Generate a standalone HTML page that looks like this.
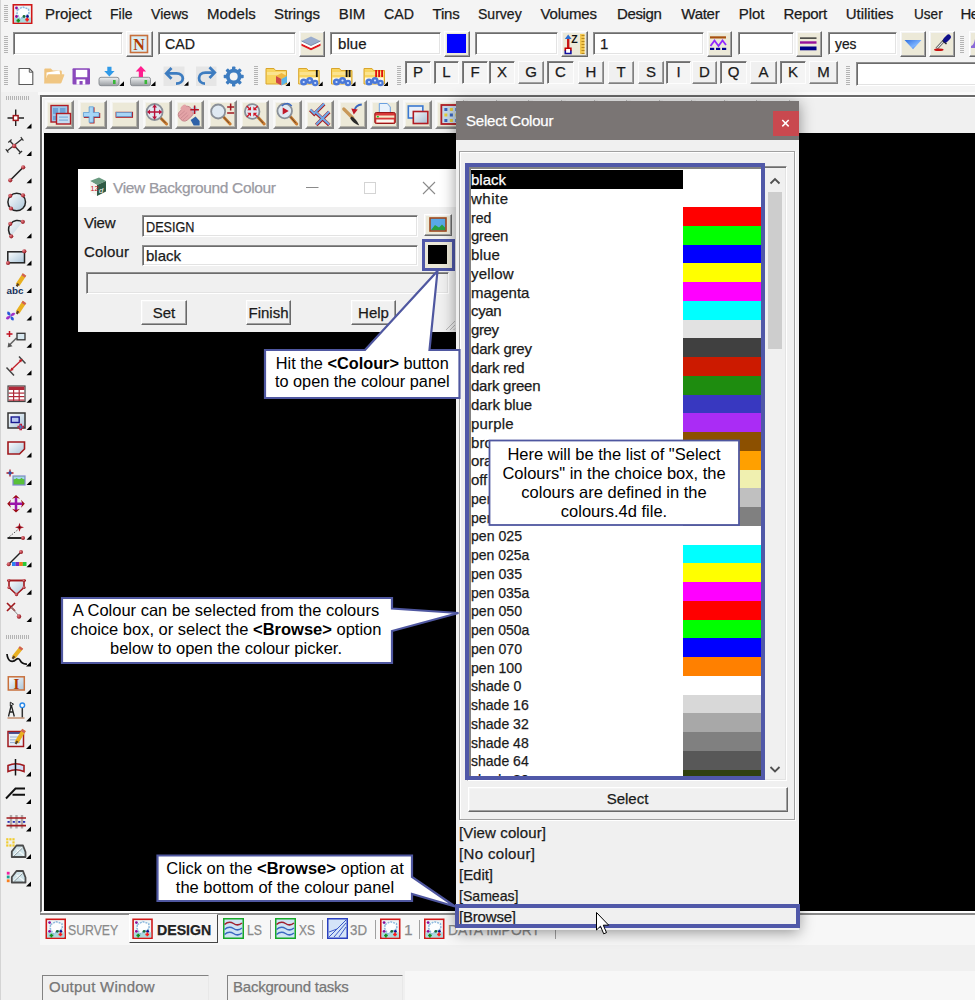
<!DOCTYPE html><html><head><meta charset="utf-8"><title>12d</title><style>
*{box-sizing:border-box;margin:0;padding:0}
html,body{width:975px;height:1000px;overflow:hidden;background:#f0f0f0;font-family:"Liberation Sans",sans-serif;}
.a{position:absolute}
.t{position:absolute;white-space:nowrap;color:#1a1a1a;line-height:1;-webkit-text-stroke:.25px}
.sunk{position:absolute;background:#fff;border:1px solid;border-color:#8e8e8e #fff #fff #8e8e8e;box-shadow:inset 1px 1px 0 #6c6c6c, inset -1px -1px 0 #e3e3e3}
.rais{position:absolute;background:#f0f0f0;border:1px solid;border-color:#fff #696969 #696969 #fff;box-shadow:inset -1px -1px 0 #a0a0a0, inset 1px 1px 0 #f4f4f4}
.lb{position:absolute;background:#f0f0f0;border:1px solid;border-color:#fdfdfd #808080 #808080 #fdfdfd;box-shadow:inset -1px -1px 0 #a0a0a0}
.lbs{position:absolute;background:#f4f4f4;border:1px solid;border-color:#808080 #fdfdfd #fdfdfd #808080;box-shadow:inset 1px 1px 0 #6e6e6e}
.vb{position:absolute;background:#ece9d8;border:2px solid;border-color:#f8f8f8 #858585 #858585 #f8f8f8;box-shadow:inset -1px -1px 0 #b4b2a8, inset 1px 1px 0 #f3f2ec}
.co{position:absolute;background:#fff;border:2px solid #4f57a0;color:#000;text-align:center;font-size:16px;line-height:19px;white-space:nowrap}
svg{position:absolute;left:0;top:0;overflow:visible}
</style></head><body>
<div class="a" style="left:0;top:0;width:975px;height:92px;background:#f4f4f4"></div>
<div class="t" style="left:45px;top:6.3px;font-size:15px;color:#1a1a1a;letter-spacing:-0.031px;">Project</div>
<div class="t" style="left:109.5px;top:6.3px;font-size:15px;color:#1a1a1a;transform:scaleX(0.9309);transform-origin:0 0;">File</div>
<div class="t" style="left:151px;top:6.3px;font-size:15px;color:#1a1a1a;transform:scaleX(0.941);transform-origin:0 0;">Views</div>
<div class="t" style="left:207px;top:6.3px;font-size:15px;color:#1a1a1a;letter-spacing:0.089px;">Models</div>
<div class="t" style="left:274px;top:6.3px;font-size:15px;color:#1a1a1a;letter-spacing:-0.114px;">Strings</div>
<div class="t" style="left:338.7px;top:6.3px;font-size:15px;color:#1a1a1a;letter-spacing:-0.034px;">BIM</div>
<div class="t" style="left:383.5px;top:6.3px;font-size:15px;color:#1a1a1a;transform:scaleX(0.9472);transform-origin:0 0;">CAD</div>
<div class="t" style="left:432.5px;top:6.3px;font-size:15px;color:#1a1a1a;letter-spacing:-0.161px;">Tins</div>
<div class="t" style="left:478px;top:6.3px;font-size:15px;color:#1a1a1a;transform:scaleX(0.936);transform-origin:0 0;">Survey</div>
<div class="t" style="left:540.5px;top:6.3px;font-size:15px;color:#1a1a1a;letter-spacing:-0.172px;">Volumes</div>
<div class="t" style="left:617px;top:6.3px;font-size:15px;color:#1a1a1a;letter-spacing:-0.359px;">Design</div>
<div class="t" style="left:681.3px;top:6.3px;font-size:15px;color:#1a1a1a;letter-spacing:-0.262px;">Water</div>
<div class="t" style="left:738.8px;top:6.3px;font-size:15px;color:#1a1a1a;letter-spacing:-0.083px;">Plot</div>
<div class="t" style="left:783.5px;top:6.3px;font-size:15px;color:#1a1a1a;letter-spacing:-0.265px;">Report</div>
<div class="t" style="left:845.8px;top:6.3px;font-size:15px;color:#1a1a1a;letter-spacing:-0.08px;">Utilities</div>
<div class="t" style="left:913.6px;top:6.3px;font-size:15px;color:#1a1a1a;transform:scaleX(0.9062);transform-origin:0 0;">User</div>
<div class="t" style="left:960.4px;top:6.3px;font-size:15px;color:#1a1a1a;letter-spacing:-0.575px;">He</div>
<div class="sunk" style="left:13px;top:32px;width:110px;height:23px"></div>
<div class="rais" style="left:126px;top:31px;width:27px;height:26px;background:#f4f4f4"></div>
<div class="sunk" style="left:158px;top:32px;width:138px;height:23px"></div>
<div class="t" style="left:165px;top:36.3px;font-size:15px;color:#1a1a1a;transform:scaleX(0.9472);transform-origin:0 0;">CAD</div>
<div class="rais" style="left:299px;top:31px;width:26px;height:26px;background:#ece9d8"></div>
<div class="sunk" style="left:330px;top:32px;width:111px;height:23px"></div>
<div class="t" style="left:338px;top:36.3px;font-size:15px;color:#1a1a1a;letter-spacing:0.046px;">blue</div>
<div class="rais" style="left:444px;top:31px;width:26px;height:26px;background:#ece9d8"><div class="a" style="left:2px;top:2px;width:19px;height:19px;background:#0000ff"></div></div>
<div class="sunk" style="left:475px;top:32px;width:83px;height:23px"></div>
<div class="rais" style="left:561px;top:31px;width:27px;height:26px;background:#ece9d8"></div>
<div class="sunk" style="left:593px;top:32px;width:111px;height:23px"></div>
<div class="t" style="left:600px;top:36.3px;font-size:15px;color:#1a1a1a;">1</div>
<div class="rais" style="left:707px;top:31px;width:25px;height:26px;background:#ece9d8"></div>
<div class="sunk" style="left:738px;top:32px;width:56px;height:23px"></div>
<div class="rais" style="left:796px;top:31px;width:26px;height:26px;background:#ece9d8"></div>
<div class="sunk" style="left:828px;top:32px;width:69px;height:23px"></div>
<div class="t" style="left:835px;top:36.3px;font-size:15px;color:#1a1a1a;transform:scaleX(0.9211);transform-origin:0 0;">yes</div>
<div class="rais" style="left:900px;top:31px;width:26px;height:26px;background:#ece9d8"></div>
<div class="rais" style="left:929px;top:31px;width:26px;height:26px;background:#ece9d8"></div>
<div class="rais" style="left:969px;top:31px;width:26px;height:26px;background:#ece9d8"></div>
<div class="lbs" style="left:405px;top:61px;width:26px;height:23px"></div>
<div class="t" style="left:412.997265625px;top:64.3px;font-size:15px;color:#1a1a1a;">P</div>
<div class="lbs" style="left:434px;top:61px;width:25px;height:23px"></div>
<div class="t" style="left:442.3287109375px;top:64.3px;font-size:15px;color:#1a1a1a;">L</div>
<div class="lbs" style="left:462px;top:61px;width:26px;height:23px"></div>
<div class="t" style="left:470.4185546875px;top:64.3px;font-size:15px;color:#1a1a1a;">F</div>
<div class="lbs" style="left:489px;top:61px;width:26px;height:23px"></div>
<div class="t" style="left:496.997265625px;top:64.3px;font-size:15px;color:#1a1a1a;">X</div>
<div class="lb" style="left:518px;top:61px;width:26px;height:23px"></div>
<div class="t" style="left:525.16640625px;top:64.3px;font-size:15px;color:#1a1a1a;">G</div>
<div class="lbs" style="left:547px;top:61px;width:27px;height:23px"></div>
<div class="t" style="left:555.08359375px;top:64.3px;font-size:15px;color:#1a1a1a;">C</div>
<div class="lb" style="left:578px;top:61px;width:26px;height:23px"></div>
<div class="t" style="left:585.58359375px;top:64.3px;font-size:15px;color:#1a1a1a;">H</div>
<div class="lb" style="left:608px;top:61px;width:26px;height:23px"></div>
<div class="t" style="left:616.4185546875px;top:64.3px;font-size:15px;color:#1a1a1a;">T</div>
<div class="lb" style="left:638px;top:61px;width:26px;height:23px"></div>
<div class="t" style="left:645.997265625px;top:64.3px;font-size:15px;color:#1a1a1a;">S</div>
<div class="lbs" style="left:666px;top:61px;width:25px;height:23px"></div>
<div class="t" style="left:676.41640625px;top:64.3px;font-size:15px;color:#1a1a1a;">I</div>
<div class="lb" style="left:692px;top:61px;width:25px;height:23px"></div>
<div class="t" style="left:699.08359375px;top:64.3px;font-size:15px;color:#1a1a1a;">D</div>
<div class="lbs" style="left:720px;top:61px;width:27px;height:23px"></div>
<div class="t" style="left:727.66640625px;top:64.3px;font-size:15px;color:#1a1a1a;">Q</div>
<div class="lb" style="left:750px;top:61px;width:27px;height:23px"></div>
<div class="t" style="left:758.497265625px;top:64.3px;font-size:15px;color:#1a1a1a;">A</div>
<div class="lbs" style="left:780px;top:61px;width:26px;height:23px"></div>
<div class="t" style="left:787.997265625px;top:64.3px;font-size:15px;color:#1a1a1a;">K</div>
<div class="lb" style="left:809px;top:61px;width:29px;height:23px"></div>
<div class="t" style="left:817.2521484375px;top:64.3px;font-size:15px;color:#1a1a1a;">M</div>
<div class="sunk" style="left:856px;top:62px;width:134px;height:24px"></div>
<div class="a" style="left:38px;top:92px;width:937px;height:3px;background:#fafafa"></div>
<div class="a" style="left:0;top:96px;width:40px;height:904px;background:#f0f0f0"></div>
<div class="a" style="left:40px;top:95px;width:940px;height:818px;background:#f0f0f0;border:2px solid;border-color:#696969 #fff #fff #696969;box-shadow:inset 1px 1px 0 #fff"></div>
<div class="a" style="left:43.5px;top:132.5px;width:932px;height:778.5px;background:#000"></div>
<div class="vb" style="left:45px;top:100px;width:29px;height:29px"></div>
<div class="vb" style="left:77.5px;top:100px;width:29px;height:29px"></div>
<div class="vb" style="left:110.1px;top:100px;width:29px;height:29px"></div>
<div class="vb" style="left:142.6px;top:100px;width:29px;height:29px"></div>
<div class="vb" style="left:175.1px;top:100px;width:29px;height:29px"></div>
<div class="vb" style="left:207.7px;top:100px;width:29px;height:29px"></div>
<div class="vb" style="left:240.2px;top:100px;width:29px;height:29px"></div>
<div class="vb" style="left:272.7px;top:100px;width:29px;height:29px"></div>
<div class="vb" style="left:305.2px;top:100px;width:29px;height:29px"></div>
<div class="vb" style="left:337.8px;top:100px;width:29px;height:29px"></div>
<div class="vb" style="left:370.3px;top:100px;width:29px;height:29px"></div>
<div class="vb" style="left:402.8px;top:100px;width:29px;height:29px"></div>
<div class="vb" style="left:435.4px;top:100px;width:29px;height:29px"></div>
<div class="vb" style="left:467.9px;top:100px;width:29px;height:29px"></div>
<div class="vb" style="left:500.4px;top:100px;width:29px;height:29px"></div>
<div class="vb" style="left:533px;top:100px;width:29px;height:29px"></div>
<div class="vb" style="left:565.5px;top:100px;width:29px;height:29px"></div>
<div class="vb" style="left:598px;top:100px;width:29px;height:29px"></div>
<div class="vb" style="left:630.5px;top:100px;width:29px;height:29px"></div>
<div class="vb" style="left:663.1px;top:100px;width:29px;height:29px"></div>
<div class="vb" style="left:695.6px;top:100px;width:29px;height:29px"></div>
<div class="vb" style="left:728.1px;top:100px;width:29px;height:29px"></div>
<div class="vb" style="left:760.7px;top:100px;width:29px;height:29px"></div>
<div class="a" style="left:40px;top:913px;width:935px;height:2px;background:#8a8a8a"></div>
<div class="a" style="left:40px;top:915px;width:935px;height:30px;background:#f7f7f7"></div>
<div class="a" style="left:0;top:945px;width:975px;height:26px;background:#f0f0f0"></div>
<div class="a" style="left:405px;top:971px;width:570px;height:29px;background:#f7f7f7"></div>
<div class="a" style="left:129px;top:914px;width:89px;height:29px;background:#f7f7f7;border:1px solid;border-color:#f7f7f7 #444 #444 #fff"></div>
<div class="t" style="left:68px;top:921.88px;font-size:15.5px;color:#8a8a8a;transform:scaleX(0.791);transform-origin:0 0;">SURVEY</div>
<div class="t" style="left:156.5px;top:921.88px;font-size:15.5px;color:#222;font-weight:bold;transform:scaleX(0.9137);transform-origin:0 0;">DESIGN</div>
<div class="t" style="left:247px;top:921.88px;font-size:15.5px;color:#8a8a8a;transform:scaleX(0.7912);transform-origin:0 0;">LS</div>
<div class="t" style="left:299px;top:921.88px;font-size:15.5px;color:#8a8a8a;transform:scaleX(0.7738);transform-origin:0 0;">XS</div>
<div class="t" style="left:350px;top:921.88px;font-size:15.5px;color:#8a8a8a;transform:scaleX(0.858);transform-origin:0 0;">3D</div>
<div class="t" style="left:404px;top:921.88px;font-size:15.5px;color:#8a8a8a;">1</div>
<div class="t" style="left:448px;top:921.88px;font-size:15.5px;color:#8a8a8a;transform:scaleX(0.8977);transform-origin:0 0;">DATA IMPORT</div>
<div class="a" style="left:42px;top:975px;width:167px;height:26px;border:1px solid;border-color:#828282 #e8e8e8 #e8e8e8 #828282;background:#f0f0f0"></div>
<div class="t" style="left:49px;top:979.3px;font-size:15px;color:#777;letter-spacing:0.263px;">Output Window</div>
<div class="a" style="left:227px;top:975px;width:176px;height:26px;border:1px solid;border-color:#828282 #e8e8e8 #e8e8e8 #828282;background:#f0f0f0"></div>
<div class="t" style="left:233px;top:979.3px;font-size:15px;color:#777;letter-spacing:-0.229px;">Background tasks</div>
<div class="a" style="left:0;top:0;width:1px;height:1000px;background:#d4d4d4"></div>
<svg width="975" height="1000"><rect x="4" y="5" width="4" height="1" fill="#b4b4b4"/><rect x="4" y="7" width="4" height="1" fill="#b4b4b4"/><rect x="4" y="9" width="4" height="1" fill="#b4b4b4"/><rect x="4" y="11" width="4" height="1" fill="#b4b4b4"/><rect x="4" y="13" width="4" height="1" fill="#b4b4b4"/><rect x="4" y="15" width="4" height="1" fill="#b4b4b4"/><rect x="4" y="17" width="4" height="1" fill="#b4b4b4"/><rect x="4" y="19" width="4" height="1" fill="#b4b4b4"/><rect x="4" y="21" width="4" height="1" fill="#b4b4b4"/><rect x="4" y="36" width="4" height="1" fill="#b4b4b4"/><rect x="4" y="38" width="4" height="1" fill="#b4b4b4"/><rect x="4" y="40" width="4" height="1" fill="#b4b4b4"/><rect x="4" y="42" width="4" height="1" fill="#b4b4b4"/><rect x="4" y="44" width="4" height="1" fill="#b4b4b4"/><rect x="4" y="46" width="4" height="1" fill="#b4b4b4"/><rect x="4" y="48" width="4" height="1" fill="#b4b4b4"/><rect x="4" y="50" width="4" height="1" fill="#b4b4b4"/><rect x="4" y="52" width="4" height="1" fill="#b4b4b4"/><rect x="4" y="66" width="4" height="1" fill="#b4b4b4"/><rect x="4" y="68" width="4" height="1" fill="#b4b4b4"/><rect x="4" y="70" width="4" height="1" fill="#b4b4b4"/><rect x="4" y="72" width="4" height="1" fill="#b4b4b4"/><rect x="4" y="74" width="4" height="1" fill="#b4b4b4"/><rect x="4" y="76" width="4" height="1" fill="#b4b4b4"/><rect x="4" y="78" width="4" height="1" fill="#b4b4b4"/><rect x="4" y="80" width="4" height="1" fill="#b4b4b4"/><rect x="4" y="82" width="4" height="1" fill="#b4b4b4"/><rect x="4" y="84" width="4" height="1" fill="#b4b4b4"/><g><rect x="13.3" y="4.8" width="18.4" height="18.4" fill="#eef6f7" stroke="#d01818" stroke-width="1.6"/><rect x="14.1" y="17.5" width="16.8" height="4.9" fill="#a9dadd"/><polygon points="17.5,10 22.5,7 28.5,9 29,14 23.5,17 20,19 17,13.5" fill="#fdfefe" stroke="#8fb8dc" stroke-width="1.5" stroke-dasharray="2,1"/><circle cx="16.5" cy="8" r="1.4" fill="#8a109a"/><circle cx="16.5" cy="16.5" r="1.4" fill="#8a109a"/><circle cx="27.5" cy="16.5" r="1.4" fill="#101090"/><circle cx="24" cy="16.5" r="1.4" fill="#186a38"/><path d="M18.3,18.8v3.6M16.5,20.6h3.6" stroke="#12901e" stroke-width="1.7" fill="none"/><path d="M27.1,17.8v3.6M25.3,19.6h3.6" stroke="#ff1818" stroke-width="1.7" fill="none"/></g><polygon points="19,68.5 29.5,68.5 32.8,72 32.8,84.5 19,84.5" fill="#fff" stroke="#5a5a5a" stroke-width="1.1"/><polyline points="29.3,68.5 29.3,72.2 32.8,72.2" fill="none" stroke="#5a5a5a" stroke-width="1"/><path d="M44.3,83.6 V69.5 q0,-1 1,-1 h5.5 l2,2 h8 q1,0 1,1 v4z" fill="#efc37d"/><polygon points="46.5,72.5 59.5,70.5 60.5,76 46.5,78" fill="#fff"/><path d="M44.3,83.6 l3.2,-8.6 q.3,-.8 1.2,-.8 H63.5 q1.2,0 .8,1.1 l-2.9,7.5 q-.3,.8 -1.2,.8z" fill="#f0c682"/><rect x="72.5" y="68.2" width="17.5" height="16.4" rx="1" fill="#8a48bc"/><rect x="75.8" y="69.8" width="11.5" height="7.4" fill="#fff"/><rect x="76.5" y="79.4" width="8.8" height="5.2" fill="#fff"/><rect x="79.5" y="81" width="3.1" height="3.6" fill="#8a48bc"/><defs><linearGradient id="dg" x1="0" y1="0" x2="0" y2="1"><stop offset="0" stop-color="#f2f3f4"/><stop offset=".45" stop-color="#c8cbce"/><stop offset="1" stop-color="#9a9ea2"/></linearGradient></defs><rect x="99" y="77.3" width="20" height="8.4" rx="2" fill="url(#dg)" stroke="#85898d" stroke-width=".9"/><rect x="113" y="80" width="2.6" height="4" fill="#38b838"/><polygon points="109.4,76.5 114.60000000000001,71 111.5,71 111.5,66.8 107.30000000000001,66.8 107.30000000000001,71 104.2,71" fill="#2f9ae8"/><polygon points="119.2,86 124,86 124,81.2" fill="#000"/><rect x="130.5" y="77.3" width="20" height="8.4" rx="2" fill="url(#dg)" stroke="#85898d" stroke-width=".9"/><rect x="144.5" y="80" width="2.6" height="4" fill="#38b838"/><polygon points="140.9,66 146.1,71.5 143,71.5 143,77 138.8,77 138.8,71.5 135.70000000000002,71.5" fill="#ff1f8f"/><polygon points="150.7,86 155.5,86 155.5,81.2" fill="#000"/><rect x="163.5" y="66.5" width="21" height="19.5" fill="#e6e6e6"/><rect x="196" y="66.5" width="20.5" height="19.5" fill="#e6e6e6"/><path d="M171.5,68 L166.3,73.4 L171.5,78.8" fill="none" stroke="#3d7cc0" stroke-width="2.8" stroke-linejoin="miter"/><path d="M167,73.4 H176.5 C185,73.4 185,83.6 176,83.6" fill="none" stroke="#3d7cc0" stroke-width="2.8"/><polygon points="184,85.7 188.5,85.7 188.5,81.2" fill="#000"/><path d="M209.5,67.2 L214.7,72.6 L209.5,78" fill="none" stroke="#3d7cc0" stroke-width="2.8" stroke-linejoin="miter"/><path d="M214,72.6 H205.5 C197,72.6 197,83.6 205,83.6" fill="none" stroke="#3d7cc0" stroke-width="2.8"/><circle cx="233.7" cy="76.5" r="5.9" fill="none" stroke="#3d7cc0" stroke-width="3.8"/><rect x="232" y="66.5" width="3.4" height="3.6" rx=".8" fill="#3d7cc0" transform="rotate(0 233.7 76.5)"/><rect x="232" y="66.5" width="3.4" height="3.6" rx=".8" fill="#3d7cc0" transform="rotate(45 233.7 76.5)"/><rect x="232" y="66.5" width="3.4" height="3.6" rx=".8" fill="#3d7cc0" transform="rotate(90 233.7 76.5)"/><rect x="232" y="66.5" width="3.4" height="3.6" rx=".8" fill="#3d7cc0" transform="rotate(135 233.7 76.5)"/><rect x="232" y="66.5" width="3.4" height="3.6" rx=".8" fill="#3d7cc0" transform="rotate(180 233.7 76.5)"/><rect x="232" y="66.5" width="3.4" height="3.6" rx=".8" fill="#3d7cc0" transform="rotate(225 233.7 76.5)"/><rect x="232" y="66.5" width="3.4" height="3.6" rx=".8" fill="#3d7cc0" transform="rotate(270 233.7 76.5)"/><rect x="232" y="66.5" width="3.4" height="3.6" rx=".8" fill="#3d7cc0" transform="rotate(315 233.7 76.5)"/><rect x="254" y="66" width="4" height="1" fill="#b4b4b4"/><rect x="254" y="68" width="4" height="1" fill="#b4b4b4"/><rect x="254" y="70" width="4" height="1" fill="#b4b4b4"/><rect x="254" y="72" width="4" height="1" fill="#b4b4b4"/><rect x="254" y="74" width="4" height="1" fill="#b4b4b4"/><rect x="254" y="76" width="4" height="1" fill="#b4b4b4"/><rect x="254" y="78" width="4" height="1" fill="#b4b4b4"/><rect x="254" y="80" width="4" height="1" fill="#b4b4b4"/><rect x="254" y="82" width="4" height="1" fill="#b4b4b4"/><rect x="254" y="84" width="4" height="1" fill="#b4b4b4"/><rect x="397" y="66" width="4" height="1" fill="#b4b4b4"/><rect x="397" y="68" width="4" height="1" fill="#b4b4b4"/><rect x="397" y="70" width="4" height="1" fill="#b4b4b4"/><rect x="397" y="72" width="4" height="1" fill="#b4b4b4"/><rect x="397" y="74" width="4" height="1" fill="#b4b4b4"/><rect x="397" y="76" width="4" height="1" fill="#b4b4b4"/><rect x="397" y="78" width="4" height="1" fill="#b4b4b4"/><rect x="397" y="80" width="4" height="1" fill="#b4b4b4"/><rect x="397" y="82" width="4" height="1" fill="#b4b4b4"/><rect x="397" y="84" width="4" height="1" fill="#b4b4b4"/><rect x="846" y="66" width="4" height="1" fill="#b4b4b4"/><rect x="846" y="68" width="4" height="1" fill="#b4b4b4"/><rect x="846" y="70" width="4" height="1" fill="#b4b4b4"/><rect x="846" y="72" width="4" height="1" fill="#b4b4b4"/><rect x="846" y="74" width="4" height="1" fill="#b4b4b4"/><rect x="846" y="76" width="4" height="1" fill="#b4b4b4"/><rect x="846" y="78" width="4" height="1" fill="#b4b4b4"/><rect x="846" y="80" width="4" height="1" fill="#b4b4b4"/><rect x="846" y="82" width="4" height="1" fill="#b4b4b4"/><rect x="846" y="84" width="4" height="1" fill="#b4b4b4"/><rect x="960" y="36" width="4" height="1" fill="#b4b4b4"/><rect x="960" y="38" width="4" height="1" fill="#b4b4b4"/><rect x="960" y="40" width="4" height="1" fill="#b4b4b4"/><rect x="960" y="42" width="4" height="1" fill="#b4b4b4"/><rect x="960" y="44" width="4" height="1" fill="#b4b4b4"/><rect x="960" y="46" width="4" height="1" fill="#b4b4b4"/><rect x="960" y="48" width="4" height="1" fill="#b4b4b4"/><rect x="960" y="50" width="4" height="1" fill="#b4b4b4"/><rect x="960" y="52" width="4" height="1" fill="#b4b4b4"/><path d="M266,84 V68.5 h8 l1.5,2 h11 V84 z" fill="#f8d560" stroke="#d9a52b" stroke-width="1"/><rect x="267" y="72" width="18.5" height="3" fill="#fbe38f"/><polygon points="281.5,73 287,76 281.5,79 276,76" fill="#f0b840"/><polygon points="276,76 281.5,79 281.5,85.5 276,82.5" fill="#d04848"/><polygon points="287,76 281.5,79 281.5,85.5 287,82.5" fill="#5ab4e8"/><polygon points="285.5,86 290,86 290,81.5" fill="#000"/><path d="M298.7,84 V68.5 h8 l1.5,2 h11 V84 z" fill="#f8d560" stroke="#d9a52b" stroke-width="1"/><rect x="299.7" y="72" width="18.5" height="3" fill="#fbe38f"/><rect x="299.7" y="77.5" width="18.5" height="6" fill="#fff" opacity=".85"/><circle cx="303.7" cy="82" r="3.6" fill="#4a78d8"/><circle cx="303.7" cy="82" r="1.1" fill="#cfe0ff"/><circle cx="309.7" cy="80.5" r="3.6" fill="#4a78d8"/><circle cx="309.7" cy="80.5" r="1.1" fill="#cfe0ff"/><circle cx="315.2" cy="83" r="3.2" fill="#4a78d8"/><circle cx="315.2" cy="83" r="1.1" fill="#cfe0ff"/><rect x="315.9" y="70" width="1.8" height="7" fill="#111"/><polygon points="318.2,86 322.7,86 322.7,81.5" fill="#000"/><path d="M331.5,84 V68.5 h8 l1.5,2 h11 V84 z" fill="#f8d560" stroke="#d9a52b" stroke-width="1"/><rect x="332.5" y="72" width="18.5" height="3" fill="#fbe38f"/><rect x="332.5" y="77.5" width="18.5" height="6" fill="#fff" opacity=".85"/><circle cx="336.5" cy="82" r="3.6" fill="#4a78d8"/><circle cx="336.5" cy="82" r="1.1" fill="#cfe0ff"/><circle cx="342.5" cy="80.5" r="3.6" fill="#4a78d8"/><circle cx="342.5" cy="80.5" r="1.1" fill="#cfe0ff"/><circle cx="348" cy="83" r="3.2" fill="#4a78d8"/><circle cx="348" cy="83" r="1.1" fill="#cfe0ff"/><rect x="348.7" y="70" width="1.8" height="7" fill="#111"/><rect x="345.7" y="70" width="1.8" height="7" fill="#111"/><polygon points="351,86 355.5,86 355.5,81.5" fill="#000"/><path d="M364,84 V68.5 h8 l1.5,2 h11 V84 z" fill="#f8d560" stroke="#d9a52b" stroke-width="1"/><rect x="365" y="72" width="18.5" height="3" fill="#fbe38f"/><rect x="365" y="77.5" width="18.5" height="6" fill="#fff" opacity=".85"/><circle cx="369" cy="82" r="3.6" fill="#4a78d8"/><circle cx="369" cy="82" r="1.1" fill="#cfe0ff"/><circle cx="375" cy="80.5" r="3.6" fill="#4a78d8"/><circle cx="375" cy="80.5" r="1.1" fill="#cfe0ff"/><circle cx="380.5" cy="83" r="3.2" fill="#4a78d8"/><circle cx="380.5" cy="83" r="1.1" fill="#cfe0ff"/><rect x="381.2" y="70" width="1.8" height="7" fill="#e01010"/><rect x="378.2" y="70" width="1.8" height="7" fill="#e01010"/><rect x="375.2" y="70" width="1.8" height="7" fill="#e01010"/><polygon points="383.5,86 388,86 388,81.5" fill="#000"/><rect x="130.5" y="35.5" width="17" height="17" fill="#d9edf4" stroke="#c8703c" stroke-width="1.6"/><text x="139" y="50" text-anchor="middle" font-family="Liberation Serif" font-weight="bold" font-size="16" fill="#b03a00">N</text><polygon points="301.5,43.5 311,48 320.5,43.5 320.5,45.8 311,50.3 301.5,45.8" fill="#e01820"/><polygon points="301.5,41 311,45.5 320.5,41 320.5,43.5 311,48 301.5,43.5" fill="#fdfdfd"/><polygon points="311,36.5 320.5,41 311,45.5 301.5,41" fill="#9aaccd"/><path d="M301.5,41 L311,45.5 L320.5,41" fill="none" stroke="#7088a8" stroke-width=".9"/><rect x="580" y="34" width="4.5" height="20" fill="#f3c74f"/><rect x="581.5" y="35" width="3" height="1" fill="#b88a20"/><rect x="581.5" y="38" width="3" height="1" fill="#b88a20"/><rect x="581.5" y="41" width="3" height="1" fill="#b88a20"/><rect x="581.5" y="44" width="3" height="1" fill="#b88a20"/><rect x="581.5" y="47" width="3" height="1" fill="#b88a20"/><rect x="581.5" y="50" width="3" height="1" fill="#b88a20"/><rect x="581.5" y="53" width="3" height="1" fill="#b88a20"/><rect x="567" y="38" width="2.4" height="11" fill="#c81818"/><polygon points="568.2,34.5 571.6,39 564.8,39" fill="#2f6fd0"/><rect x="565.3" y="48.3" width="5.6" height="5.2" fill="#fff"/><path d="M565.3,51 V48.3 H570.9 V51" fill="none" stroke="#c00000" stroke-width="1.6"/><path d="M565.3,50.5 V53.5 H570.9 V50.5" fill="none" stroke="#1010a0" stroke-width="1.6"/><text x="574.5" y="43" text-anchor="middle" font-family="Liberation Sans" font-weight="bold" font-size="10.5" fill="#111">Z</text><rect x="710" y="36.3" width="16" height="2.2" fill="#a8520f"/><polyline points="710.5,46 714.5,40.5 718.5,46 722.5,40.5 726,45" fill="none" stroke="#9228ff" stroke-width="1.8"/><rect x="710" y="47.8" width="4.2" height="2.2" fill="#000090"/><rect x="716" y="47.8" width="4.2" height="2.2" fill="#000090"/><rect x="722" y="47.8" width="4.2" height="2.2" fill="#000090"/><rect x="800" y="37.5" width="16.5" height="1.2" fill="#111"/><rect x="800" y="41.3" width="16.5" height="2.4" fill="#96109a"/><rect x="800" y="46.5" width="16.5" height="3.8" fill="#000088"/><defs><linearGradient id="dd" x1="0" y1="0" x2="1" y2="1"><stop offset="0" stop-color="#2f6fe0"/><stop offset=".6" stop-color="#7db4ff"/><stop offset="1" stop-color="#2a5fc8"/></linearGradient></defs><polygon points="904.5,40 921.5,40 913,49.3" fill="url(#dd)"/><path d="M936.5,48.8 L944.5,40" stroke="#777" stroke-width="2.8"/><path d="M937,48.3 L944.5,40" stroke="#f4f4f4" stroke-width="1"/><path d="M942.5,40.5 L946.5,44" stroke="#222" stroke-width="1.4"/><path d="M945.5,40 L948.5,37" stroke="#10108a" stroke-width="5" stroke-linecap="round"/><ellipse cx="938.8" cy="49.8" rx="4.8" ry="1.3" fill="#c81010"/><path d="M971,46 q3,-1 4,-7 v9 h-4z" fill="#8a6ad8"/><rect x="51" y="105.5" width="17" height="16.5" fill="#9cc7ea" stroke="#b01c24" stroke-width="1.4"/><rect x="53" y="108" width="5" height="6" fill="#6ea3d8"/><rect x="60" y="108" width="5.5" height="6" fill="#6ea3d8"/><rect x="53" y="116" width="4" height="4" fill="#6ea3d8"/><rect x="56.5" y="113.5" width="14" height="10.5" fill="#c6def2" stroke="#b01c24" stroke-width="1.4"/><rect x="59" y="116.5" width="9" height="1.2" fill="#7fb0de"/><rect x="59" y="119.5" width="9" height="1.2" fill="#7fb0de"/><path d="M89.53,107.19999999999999 h5 v5.699999999999999 h5.699999999999999 v5 h-5.699999999999999 v5.699999999999999 h-5 v-5.699999999999999 h-5.699999999999999 v-5 h5.699999999999999 z" fill="#b01c24"/><path d="M89.13000000000001,106.8 h4.2 v5.699999999999999 h5.699999999999999 v4.2 h-5.699999999999999 v5.699999999999999 h-4.2 v-5.699999999999999 h-5.699999999999999 v-4.2 h5.699999999999999 z" fill="#a6d6f7" stroke="#5e9fd6" stroke-width=".8"/><rect x="115.56" y="111.8" width="17.5" height="6" fill="#b01c24"/><rect x="116.26" y="112.5" width="15.5" height="4" fill="#a6d6f7" stroke="#5e9fd6" stroke-width=".7"/><path d="M160.2,117.6 L166.59,124" stroke="#c87a30" stroke-width="3" stroke-linecap="round"/><path d="M160.2,117.6 L165.59,123" stroke="#6a4a2a" stroke-width="1"/><circle cx="154.59" cy="112" r="8" fill="#dfe9f2" stroke="#8a9098" stroke-width="1.8"/><path d="M148.59,112 h12 M154.59,106 v12" stroke="#b8103a" stroke-width="1.4"/><polygon points="162.29,112 159.09,114.4 159.09,109.6" fill="#b8103a"/><polygon points="146.89000000000001,112 150.09,109.6 150.09,114.4" fill="#b8103a"/><polygon points="154.59,119.7 156.99,116.5 152.19,116.5" fill="#b8103a"/><polygon points="154.59,104.3 152.19,107.5 156.99,107.5" fill="#b8103a"/><g transform="rotate(-42 185.62 113.5)"><rect x="178.12" y="108" width="15" height="11.5" rx="4.5" fill="#e3a3a6" stroke="#c07c84" stroke-width=".8"/><path d="M178.62,111 h8 M178.32,113.8 h9 M178.62,116.5 h8" stroke="#c98890" stroke-width=".8"/><ellipse cx="188.12" cy="107.5" rx="3.5" ry="2" fill="#e3a3a6"/></g><polygon points="190.62,120 195.62,116.5 199.62,121 199.62,125.5 193.62,125.5" fill="#2f62a8"/><polygon points="194.62,105.5 198.62,109.8 194.62,114 190.62,109.8" fill="#a8cde8" opacity=".8"/><path d="M190.32,109.8 h8.6 M194.62,105.5 v8.6" stroke="#b81020" stroke-width="1.5"/><path d="M223.1,116.4 L230.15,124" stroke="#c87a30" stroke-width="3" stroke-linecap="round"/><path d="M223.1,116.4 L229.15,123" stroke="#6a4a2a" stroke-width="1"/><circle cx="218.15" cy="111.5" r="7" fill="#dfe9f2" stroke="#8a9098" stroke-width="1.8"/><path d="M227.15,107 h7 M230.65,103.5 v7 M227.15,113 h7" stroke="#a01820" stroke-width="1.5"/><path d="M257.3,116.6 L264.18,124" stroke="#c87a30" stroke-width="3" stroke-linecap="round"/><path d="M257.3,116.6 L263.18,123" stroke="#6a4a2a" stroke-width="1"/><circle cx="252.18" cy="111.5" r="7.3" fill="#dfe9f2" stroke="#8a9098" stroke-width="1.8"/><polygon points="253.38,112.7 257.18,112.7 253.38,116.5" fill="#d01828"/><path d="M254.18,113.5 L257.68,117" stroke="#d01828" stroke-width="1.2"/><polygon points="250.98000000000002,112.7 247.18,112.7 250.98000000000002,116.5" fill="#d01828"/><path d="M250.18,113.5 L246.68,117" stroke="#d01828" stroke-width="1.2"/><polygon points="253.38,110.3 257.18,110.3 253.38,106.5" fill="#d01828"/><path d="M254.18,109.5 L257.68,106" stroke="#d01828" stroke-width="1.2"/><polygon points="250.98000000000002,110.3 247.18,110.3 250.98000000000002,106.5" fill="#d01828"/><path d="M250.18,109.5 L246.68,106" stroke="#d01828" stroke-width="1.2"/><path d="M289.8,116.1 L296.71000000000004,124" stroke="#c87a30" stroke-width="3" stroke-linecap="round"/><path d="M289.8,116.1 L295.71000000000004,123" stroke="#6a4a2a" stroke-width="1"/><circle cx="284.71000000000004" cy="111" r="7.3" fill="#dfe9f2" stroke="#8a9098" stroke-width="1.8"/><polygon points="282.71000000000004,107.5 288.71000000000004,111 282.71000000000004,114.5" fill="#c01828"/><path d="M281.71000000000004,106 q6,-5 10,0" stroke="#3a68c0" stroke-width="1.5" fill="none"/><path d="M310.24,110 l4,4 l10,-10" stroke="#a81c24" stroke-width="3.4" fill="none"/><path d="M310.24,109.5 l4,4 l10,-10" stroke="#6fa8e8" stroke-width="2.2" fill="none"/><path d="M316.24,113 l13,12 M329.24,112 l-13,13" stroke="#a81c24" stroke-width="3.6" fill="none"/><path d="M316.24,112.5 l13,12 M329.24,111.5 l-13,13" stroke="#6fa8e8" stroke-width="2.2" fill="none"/><path d="M343.77,109 L352.77,118" stroke="#c89858" stroke-width="3.2" stroke-linecap="round"/><path d="M351.77,116 L358.77,125 L354.77,121 z" fill="#222"/><path d="M351.27,116.5 q5,2 8,9 q-6,-2 -9,-7z" fill="#2a2a2a"/><path d="M361.77,104.5 q-6,0.5 -7.5,6" stroke="#3a68c0" stroke-width="1.8" fill="none"/><polygon points="351.27,108.5 357.77,109.5 353.77,114.5" fill="#c01828"/><polygon points="379.3,103.5 387.3,103.5 390.3,107 390.3,114 379.3,114" fill="#e8f2fc" stroke="#6aa0e0" stroke-width="1"/><rect x="374.8" y="112.5" width="20.5" height="11" rx="1.5" fill="#d83838" stroke="#981818" stroke-width="1"/><rect x="375.8" y="115.5" width="18.5" height="2.2" fill="#f4e8c8"/><rect x="376.3" y="119.5" width="17.5" height="3" fill="#f8f8f0"/><rect x="376.8" y="116" width="2" height="1.4" fill="#20c020"/><rect x="408.33000000000004" y="106" width="14.5" height="12" fill="#e8f0fa" stroke="#3a78d0" stroke-width="1.6"/><defs><linearGradient id="wg" x1="0" y1="0" x2="1" y2="1"><stop offset="0" stop-color="#f4f8fc"/><stop offset="1" stop-color="#a8bcd0"/></linearGradient></defs><rect x="413.33000000000004" y="111.5" width="14.5" height="12" fill="url(#wg)" stroke="#b01c24" stroke-width="1.6"/><rect x="441.36" y="105" width="19" height="19" fill="#c8dcee" stroke="#b01c24" stroke-width="1.8"/><rect x="444.36" y="108" width="3" height="3" fill="#3a68c0"/><rect x="444.36" y="113.5" width="3" height="3" fill="#e8d040"/><rect x="444.36" y="119" width="3" height="3" fill="#3a68c0"/><rect x="449.86" y="108" width="3" height="3" fill="#e8d040"/><rect x="449.86" y="113.5" width="3" height="3" fill="#3a68c0"/><rect x="449.86" y="119" width="3" height="3" fill="#e8d040"/><rect x="455.36" y="108" width="3" height="3" fill="#3a68c0"/><rect x="455.36" y="113.5" width="3" height="3" fill="#e8d040"/><rect x="455.36" y="119" width="3" height="3" fill="#3a68c0"/><rect x="6" y="96" width="1" height="4" fill="#b4b4b4"/><rect x="8" y="96" width="1" height="4" fill="#b4b4b4"/><rect x="10" y="96" width="1" height="4" fill="#b4b4b4"/><rect x="12" y="96" width="1" height="4" fill="#b4b4b4"/><rect x="14" y="96" width="1" height="4" fill="#b4b4b4"/><rect x="16" y="96" width="1" height="4" fill="#b4b4b4"/><rect x="18" y="96" width="1" height="4" fill="#b4b4b4"/><rect x="20" y="96" width="1" height="4" fill="#b4b4b4"/><rect x="22" y="96" width="1" height="4" fill="#b4b4b4"/><rect x="24" y="96" width="1" height="4" fill="#b4b4b4"/><rect x="26" y="96" width="1" height="4" fill="#b4b4b4"/><rect x="28" y="96" width="1" height="4" fill="#b4b4b4"/><rect x="6" y="635" width="1" height="4" fill="#b4b4b4"/><rect x="8" y="635" width="1" height="4" fill="#b4b4b4"/><rect x="10" y="635" width="1" height="4" fill="#b4b4b4"/><rect x="12" y="635" width="1" height="4" fill="#b4b4b4"/><rect x="14" y="635" width="1" height="4" fill="#b4b4b4"/><rect x="16" y="635" width="1" height="4" fill="#b4b4b4"/><rect x="18" y="635" width="1" height="4" fill="#b4b4b4"/><rect x="20" y="635" width="1" height="4" fill="#b4b4b4"/><rect x="22" y="635" width="1" height="4" fill="#b4b4b4"/><rect x="24" y="635" width="1" height="4" fill="#b4b4b4"/><rect x="26" y="635" width="1" height="4" fill="#b4b4b4"/><rect x="28" y="635" width="1" height="4" fill="#b4b4b4"/><defs><linearGradient id="lb" x1="0" y1="0" x2="1" y2="1"><stop offset="0" stop-color="#fdfefe"/><stop offset="1" stop-color="#a9c4d8"/></linearGradient><radialGradient id="rd" cx=".35" cy=".35" r=".7"><stop offset="0" stop-color="#e88088"/><stop offset="1" stop-color="#901018"/></radialGradient></defs><path d="M7.5,118 h16.5 M15.7,109.5 v16.5" stroke="#222" stroke-width="1.4"/><rect x="13.3" y="115.6" width="4.8" height="4.8" fill="#fff" stroke="#a0181c" stroke-width="1.5"/><path d="M7,151 L22,139 M10,141 L20.5,152.5" stroke="#333" stroke-width="1.4"/><path d="M5.8,149.2 l2.6,3.4 M20.8,137.2 l2.6,3.4 M8.3,142.5 l3.3,-3 M18.8,154 l3.3,-3" stroke="#333" stroke-width="1.2"/><circle cx="14.2" cy="146" r="2.2" fill="url(#rd)"/><path d="M10.5,180 L23,167.5" stroke="#222" stroke-width="1.6"/><circle cx="10.2" cy="180.3" r="2.1" fill="url(#rd)"/><circle cx="23.2" cy="167.3" r="2.1" fill="url(#rd)"/><circle cx="16.7" cy="202" r="8.8" fill="url(#lb)" stroke="#222" stroke-width="1.5"/><circle cx="10.3" cy="195.8" r="2.1" fill="url(#rd)"/><circle cx="23" cy="195.3" r="2.1" fill="url(#rd)"/><circle cx="11" cy="208.5" r="2.1" fill="url(#rd)"/><path d="M11.3,236 A 9,9 0 0 1 22.5,222 Z" fill="url(#lb)" opacity=".8"/><path d="M11.3,236 A 9,9 0 0 1 22.5,222" fill="none" stroke="#222" stroke-width="1.5"/><circle cx="10.3" cy="223.8" r="2.1" fill="url(#rd)"/><circle cx="22.8" cy="221.8" r="2.1" fill="url(#rd)"/><circle cx="11.2" cy="236.3" r="2.1" fill="url(#rd)"/><rect x="7.8" y="251.8" width="16.7" height="11" fill="url(#lb)" stroke="#222" stroke-width="1.5"/><circle cx="24.3" cy="251.3" r="2.1" fill="url(#rd)"/><circle cx="8" cy="263" r="2.1" fill="url(#rd)"/><path d="M24.5,274.5 L17.5,285" stroke="#e9b020" stroke-width="4.2"/><path d="M24.5,274.5 L23.2,276.4" stroke="#d06058" stroke-width="4.2"/><path d="M18.3,283.7 L16.7,286.3" stroke="#5a4020" stroke-width="2.2"/><text x="6.5" y="293.5" font-family="Liberation Sans" font-weight="bold" font-size="9.5" fill="#17305a" textLength="17" lengthAdjust="spacingAndGlyphs">abc</text><path d="M24.5,302 L17.5,312.5" stroke="#e9b020" stroke-width="4.2"/><path d="M24.5,302 L23.2,303.9" stroke="#d06058" stroke-width="4.2"/><path d="M18.3,311.2 L16.7,313.8" stroke="#5a4020" stroke-width="2.2"/><path d="M10.5,316 q-4.5,-1 -3,-4.5 q3.5,0 3,4.5z M10.5,316 q4.5,1 3,4.5 q-3.5,0 -3,-4.5z" fill="#2a58d8"/><path d="M10.5,316 q1,-4.5 4.5,-3 q0,3.5 -4.5,3z M10.5,316 q-1,4.5 -4.5,3 q0,-3.5 4.5,-3z" fill="#a030c8"/><path d="M6.5,334 h6 M9.5,331 v6" stroke="#c01020" stroke-width="1.5"/><path d="M16.5,338 L9,345.5" stroke="#666" stroke-width="1.6"/><polygon points="7.5,347.5 8.5,342.5 12.5,346.3" fill="#555"/><rect x="17" y="333.3" width="8" height="6.5" fill="#d8e8f0" stroke="#333" stroke-width="1.3"/><path d="M19,356.5 L25.5,363.5 M6.5,367.5 L14,375.5" stroke="#444" stroke-width="1.5"/><path d="M11,370 L21.5,360" stroke="#c02028" stroke-width="1.3"/><polygon points="9.8,371.2 11.5,367.5 13.7,370" fill="#c02028"/><polygon points="22.7,358.8 21,362.5 18.8,360" fill="#c02028"/><rect x="8" y="386" width="17" height="15.5" fill="#fff" stroke="#444" stroke-width="1.2"/><rect x="8.6" y="386.6" width="15.8" height="3.4" fill="#b02838"/><rect x="8.6" y="392.5" width="15.8" height="1.2" fill="#b02838"/><rect x="8.6" y="396" width="15.8" height="1.2" fill="#b02838"/><rect x="8.6" y="399.5" width="15.8" height="1.2" fill="#b02838"/><rect x="13" y="390" width="1.2" height="11" fill="#b02838"/><rect x="18.6" y="390" width="1.2" height="11" fill="#b02838"/><rect x="8" y="413" width="17" height="15" fill="url(#lb)" stroke="#333" stroke-width="1.5"/><rect x="11.2" y="417" width="8" height="5.5" fill="#b8c8f0" stroke="#1a1a90" stroke-width="1.4"/><path d="M17.5,427 h6.5 M20.7,423.8 v6.5" stroke="#c81828" stroke-width="2.6"/><path d="M18.5,427 h4.5 M20.7,424.8 v4.5" stroke="#3a80d8" stroke-width="1"/><polygon points="8,442 24.5,442 24.5,449 19.5,454 8,454" fill="url(#lb)" stroke="#a0181c" stroke-width="1.6"/><path d="M6.5,473 h7 M10,469.5 v7" stroke="#b01820" stroke-width="1.3"/><circle cx="10" cy="473" r="1.7" fill="#2a50b0"/><rect x="13" y="476" width="12" height="9" fill="#58c038" stroke="#8088d0" stroke-width="1.2"/><rect x="13.6" y="476.6" width="10.8" height="2.6" fill="#a8d0f4"/><path d="M13.6,480.5 l3,-2.5 l2.5,1.8 l2.5,-2 l2.8,2.7z" fill="#58c038"/><path d="M9.5,503.7 h13 M16,497.2 v13" stroke="#9a14aa" stroke-width="2.5"/><polygon points="24.8,503.7 21,507.7 22.3,503.7 21,499.7" fill="#9a0814"/><polygon points="7.199999999999999,503.7 11,499.7 9.7,503.7 11,507.7" fill="#9a0814"/><polygon points="16,512.5 20,508.7 16,510 12,508.7" fill="#9a0814"/><polygon points="16,494.9 12,498.7 16,497.4 20,498.7" fill="#9a0814"/><path d="M19.5,522.8 l1.1,3.4 l3.4,1.1 l-3.4,1.1 l-1.1,3.4 l-1.1,-3.4 l-3.4,-1.1 l3.4,-1.1z" fill="#a81020"/><circle cx="19.5" cy="527.3" r=".9" fill="#401010"/><path d="M17.5,530 L9,537" stroke="#555" stroke-width="1" stroke-dasharray="1.5,1.5"/><path d="M7.5,538 H22" stroke="#111" stroke-width="1.8"/><circle cx="23" cy="538" r="2" fill="url(#rd)"/><path d="M9,564 L21,552" stroke="#222" stroke-width="1.5"/><circle cx="21" cy="552" r="2" fill="url(#rd)"/><circle cx="8.7" cy="564.3" r="2" fill="url(#rd)"/><rect x="12" y="562" width="3.7" height="4" fill="#2a80f0"/><rect x="15.6" y="562" width="3.7" height="4" fill="#7a28c0"/><rect x="19.2" y="562" width="3.7" height="4" fill="#f07820"/><rect x="22.8" y="562" width="3.7" height="4" fill="#28c838"/><polygon points="9,580.5 24,580.5 24,587.5 16.5,594.5 9,587.5" fill="url(#lb)" stroke="#a0181c" stroke-width="1.6"/><path d="M7,580.5 h19" stroke="#a0181c" stroke-width="1.6"/><circle cx="9" cy="587.5" r="1.6" fill="url(#rd)"/><circle cx="24" cy="587.5" r="1.6" fill="url(#rd)"/><circle cx="16.5" cy="594.5" r="1.7" fill="url(#rd)"/><circle cx="9" cy="580.5" r="1.5" fill="url(#rd)"/><circle cx="24" cy="580.5" r="1.5" fill="url(#rd)"/><path d="M7,603 l8,8 M15,603 l-8,8" stroke="#a0181c" stroke-width="1.7"/><path d="M11,607 L19,616" stroke="#888" stroke-width="1"/><circle cx="19" cy="616.5" r="2.2" fill="url(#rd)"/><polygon points="26.5,128.5 31.5,128.5 31.5,123.5" fill="#000"/><polygon points="26.5,155.92000000000002 31.5,155.92000000000002 31.5,150.92000000000002" fill="#000"/><polygon points="26.5,183.34 31.5,183.34 31.5,178.34" fill="#000"/><polygon points="26.5,210.76 31.5,210.76 31.5,205.76" fill="#000"/><polygon points="26.5,238.18 31.5,238.18 31.5,233.18" fill="#000"/><polygon points="26.5,265.6 31.5,265.6 31.5,260.6" fill="#000"/><polygon points="26.5,293.02 31.5,293.02 31.5,288.02" fill="#000"/><polygon points="26.5,320.44 31.5,320.44 31.5,315.44" fill="#000"/><polygon points="26.5,347.86 31.5,347.86 31.5,342.86" fill="#000"/><polygon points="26.5,375.28000000000003 31.5,375.28000000000003 31.5,370.28000000000003" fill="#000"/><polygon points="26.5,402.70000000000005 31.5,402.70000000000005 31.5,397.70000000000005" fill="#000"/><polygon points="26.5,430.12 31.5,430.12 31.5,425.12" fill="#000"/><polygon points="26.5,457.54 31.5,457.54 31.5,452.54" fill="#000"/><polygon points="26.5,484.96000000000004 31.5,484.96000000000004 31.5,479.96000000000004" fill="#000"/><polygon points="26.5,512.38 31.5,512.38 31.5,507.38" fill="#000"/><polygon points="26.5,539.8 31.5,539.8 31.5,534.8" fill="#000"/><polygon points="26.5,567.22 31.5,567.22 31.5,562.22" fill="#000"/><polygon points="26.5,594.6400000000001 31.5,594.6400000000001 31.5,589.6400000000001" fill="#000"/><polygon points="26.5,622.0600000000001 31.5,622.0600000000001 31.5,617.0600000000001" fill="#000"/><path d="M21.5,647.5 L13.5,657.5" stroke="#e9b020" stroke-width="4.2"/><path d="M21.5,647.5 L20.1,649.3" stroke="#d06058" stroke-width="4.2"/><path d="M14.5,656.3 L12.5,658.7" stroke="#5a4020" stroke-width="2.2"/><path d="M7,654 q0.5,6 4,7.2 q3,0.5 5,-1.5 q2.5,-2.2 4,0.5 q2,4.2 7,3.8" fill="none" stroke="#111" stroke-width="1.7"/><rect x="8.3" y="676.8" width="16" height="13.2" fill="url(#lb)" stroke="#c8703c" stroke-width="1.5"/><text x="16.4" y="689" text-anchor="middle" font-family="Liberation Serif" font-weight="bold" font-size="15" fill="#b03a00">I</text><path d="M11.3,705 L8.5,716.5 M11.3,705 L14.3,716.5 M9.7,712 h3.4" stroke="#222" stroke-width="1.3" fill="none"/><polygon points="10.3,702.2 13.6,704.2 10.3,706.2" fill="none" stroke="#222" stroke-width="1"/><path d="M7.5,718 H24.5" stroke="#c08868" stroke-width="1.4"/><path d="M22.3,707.5 V717.3" stroke="#333" stroke-width="1.5"/><circle cx="22.3" cy="705.3" r="2.3" fill="#fff" stroke="#2a88e8" stroke-width="1.4"/><rect x="8" y="731.5" width="15.5" height="15" fill="#e8f0f8" stroke="#a0181c" stroke-width="1.5"/><rect x="8.7" y="732.2" width="14" height="1.6" fill="#28307a"/><rect x="10" y="736.5" width="10" height="1" fill="#9ab0d0"/><rect x="10" y="739.3" width="10" height="1" fill="#9ab0d0"/><rect x="10" y="742.1" width="10" height="1" fill="#9ab0d0"/><path d="M24,730 L16.5,742.5" stroke="#e9b020" stroke-width="4.2"/><path d="M24,730 L22.6,732.2" stroke="#d06058" stroke-width="4.2"/><path d="M17.4,741 L15.6,744" stroke="#5a4020" stroke-width="2.2"/><path d="M8,765.5 q8,-3.5 16,0 v6 q-8,-3.5 -16,0z" fill="#cfdcf4" stroke="#a0181c" stroke-width="1.6"/><path d="M15.5,759 V775.5" stroke="#111" stroke-width="1.5"/><path d="M6,798.5 L15.5,788.5 H25 M12.5,794.8 H25" stroke="#111" stroke-width="1.9" fill="none"/><rect x="9.8" y="815" width="2.4" height="13.5" fill="#b0a8a8"/><rect x="15.3" y="815" width="2.4" height="13.5" fill="#b0a8a8"/><rect x="20.8" y="815" width="2.4" height="13.5" fill="#b0a8a8"/><path d="M6.5,818 H26 M6.5,825.6 H26" stroke="#a0181c" stroke-width="1.7"/><rect x="7.5" y="821" width="2.2" height="1.8" fill="#2a30b0"/><rect x="12.7" y="821" width="2.2" height="1.8" fill="#2a30b0"/><rect x="18.2" y="821" width="2.2" height="1.8" fill="#2a30b0"/><rect x="23" y="821" width="2.2" height="1.8" fill="#2a30b0"/><rect x="6.2" y="838.2" width="2.2" height="2.2" fill="#f0cc30"/><rect x="6.2" y="841.3" width="2.2" height="2.2" fill="#f0cc30"/><rect x="6.2" y="844.4" width="2.2" height="2.2" fill="#f0cc30"/><rect x="9.3" y="838.2" width="2.2" height="2.2" fill="#f0cc30"/><rect x="9.3" y="844.4" width="2.2" height="2.2" fill="#f0cc30"/><rect x="12.4" y="838.2" width="2.2" height="2.2" fill="#f0cc30"/><rect x="12.4" y="841.3" width="2.2" height="2.2" fill="#f0cc30"/><rect x="12.4" y="844.4" width="2.2" height="2.2" fill="#f0cc30"/><polygon points="11.8,851.5 16.5,845.5 23,845.5 25.5,852 25.5,857 11.8,857" fill="#cfe2e8" stroke="#4a4a4a" stroke-width="1.8" stroke-linejoin="round"/><path d="M13.5,855.5 L22,847.5 M16.5,849.5 L24,855.5" stroke="#f4f8f8" stroke-width="1.2"/><path d="M14,856 L22.5,848" stroke="#6a7a80" stroke-width=".7"/><rect x="6.8" y="871.8" width="2.8" height="2.8" fill="#f020a0"/><rect x="6.8" y="875.6" width="2.8" height="2.8" fill="#18a090"/><rect x="6.8" y="879.4" width="2.8" height="2.8" fill="#f88020"/><polygon points="11.8,877 16.5,871 23,871 25.5,877.5 25.5,882.5 11.8,882.5" fill="#cfe2e8" stroke="#4a4a4a" stroke-width="1.8" stroke-linejoin="round"/><path d="M13.5,881 L22,873 M16.5,875 L24,881" stroke="#f4f8f8" stroke-width="1.2"/><path d="M14,881.5 L22.5,873.5" stroke="#6a7a80" stroke-width=".7"/><polygon points="26,666.4 31,666.4 31,661.4" fill="#000"/><polygon points="26,693.9 31,693.9 31,688.9" fill="#000"/><polygon points="26,721.4 31,721.4 31,716.4" fill="#000"/><polygon points="26,748.9 31,748.9 31,743.9" fill="#000"/><polygon points="26,776.4 31,776.4 31,771.4" fill="#000"/><polygon points="26,803.9 31,803.9 31,798.9" fill="#000"/><polygon points="26,831.4 31,831.4 31,826.4" fill="#000"/><polygon points="26,858.9 31,858.9 31,853.9" fill="#000"/><polygon points="26,886.4 31,886.4 31,881.4" fill="#000"/><g><rect x="46.3" y="919.3" width="18.9" height="18.9" fill="#eef6f7" stroke="#d01818" stroke-width="1.6"/><rect x="47.1" y="932.3" width="17.3" height="5.1" fill="#a9dadd"/><polygon points="50.6,924.6 55.8,921.6 61.9,923.6 62.4,928.8 56.8,931.8 53.2,933.9 50.1,928.2" fill="#fdfefe" stroke="#8fb8dc" stroke-width="1.5" stroke-dasharray="2,1"/><circle cx="49.6" cy="922.6" r="1.4" fill="#8a109a"/><circle cx="49.6" cy="931.3" r="1.4" fill="#8a109a"/><circle cx="60.9" cy="931.3" r="1.4" fill="#101090"/><circle cx="57.3" cy="931.3" r="1.4" fill="#186a38"/><path d="M51.4,933.7v3.7M49.6,935.5h3.7" stroke="#12901e" stroke-width="1.7" fill="none"/><path d="M60.5,932.6v3.7M58.6,934.5h3.7" stroke="#ff1818" stroke-width="1.7" fill="none"/></g><g><rect x="133.10000000000002" y="919.3" width="18.9" height="18.9" fill="#eef6f7" stroke="#d01818" stroke-width="1.6"/><rect x="133.9" y="932.3" width="17.3" height="5.1" fill="#a9dadd"/><polygon points="137.4,924.6 142.6,921.6 148.7,923.6 149.2,928.8 143.6,931.8 140,933.9 136.9,928.2" fill="#fdfefe" stroke="#8fb8dc" stroke-width="1.5" stroke-dasharray="2,1"/><circle cx="136.4" cy="922.6" r="1.4" fill="#8a109a"/><circle cx="136.4" cy="931.3" r="1.4" fill="#8a109a"/><circle cx="147.7" cy="931.3" r="1.4" fill="#101090"/><circle cx="144.1" cy="931.3" r="1.4" fill="#186a38"/><path d="M138.2,933.7v3.7M136.4,935.5h3.7" stroke="#12901e" stroke-width="1.7" fill="none"/><path d="M147.3,932.6v3.7M145.4,934.5h3.7" stroke="#ff1818" stroke-width="1.7" fill="none"/></g><rect x="223.75" y="918.75" width="19.5" height="19.5" fill="#cfe4f4" stroke="#18a828" stroke-width="1.5"/><path d="M224.5,924.5 q4.5,-4 9,-1 t8.5,-0.5" fill="none" stroke="#a02030" stroke-width="1.5"/><path d="M224.5,929.5 q4.5,-4 9,-1 t8.5,-0.5" fill="none" stroke="#3a68c0" stroke-width="1.5"/><path d="M224.5,934.5 q4.5,-4 9,-1 t8.5,-0.5" fill="none" stroke="#3a68c0" stroke-width="1.5"/><rect x="275.75" y="918.75" width="19.5" height="19.5" fill="#cfe4f4" stroke="#18a828" stroke-width="1.5"/><path d="M276.5,924.5 q4.5,-4 9,-1 t8.5,-0.5" fill="none" stroke="#a02030" stroke-width="1.5"/><path d="M276.5,929.5 q4.5,-4 9,-1 t8.5,-0.5" fill="none" stroke="#3a68c0" stroke-width="1.5"/><path d="M276.5,934.5 q4.5,-4 9,-1 t8.5,-0.5" fill="none" stroke="#3a68c0" stroke-width="1.5"/><rect x="327.75" y="918.75" width="19.5" height="19.5" fill="#d4e4f8" stroke="#2a40c0" stroke-width="1.5"/><path d="M329,937 L346,920 M334,937 L346,923 M339,937 L346,927 M329,932 L337,929" stroke="#3a58c8" stroke-width="1" fill="none"/><g><rect x="380.8" y="919.3" width="18.9" height="18.9" fill="#eef6f7" stroke="#d01818" stroke-width="1.6"/><rect x="381.6" y="932.3" width="17.3" height="5.1" fill="#a9dadd"/><polygon points="385.1,924.6 390.2,921.6 396.4,923.6 396.9,928.8 391.3,931.8 387.7,933.9 384.6,928.2" fill="#fdfefe" stroke="#8fb8dc" stroke-width="1.5" stroke-dasharray="2,1"/><circle cx="384.1" cy="922.6" r="1.4" fill="#8a109a"/><circle cx="384.1" cy="931.3" r="1.4" fill="#8a109a"/><circle cx="395.4" cy="931.3" r="1.4" fill="#101090"/><circle cx="391.8" cy="931.3" r="1.4" fill="#186a38"/><path d="M385.9,933.7v3.7M384.1,935.5h3.7" stroke="#12901e" stroke-width="1.7" fill="none"/><path d="M395,932.6v3.7M393.1,934.5h3.7" stroke="#ff1818" stroke-width="1.7" fill="none"/></g><g><rect x="424.8" y="919.3" width="18.9" height="18.9" fill="#eef6f7" stroke="#d01818" stroke-width="1.6"/><rect x="425.6" y="932.3" width="17.3" height="5.1" fill="#a9dadd"/><polygon points="429.1,924.6 434.2,921.6 440.4,923.6 440.9,928.8 435.3,931.8 431.7,933.9 428.6,928.2" fill="#fdfefe" stroke="#8fb8dc" stroke-width="1.5" stroke-dasharray="2,1"/><circle cx="428.1" cy="922.6" r="1.4" fill="#8a109a"/><circle cx="428.1" cy="931.3" r="1.4" fill="#8a109a"/><circle cx="439.4" cy="931.3" r="1.4" fill="#101090"/><circle cx="435.8" cy="931.3" r="1.4" fill="#186a38"/><path d="M429.9,933.7v3.7M428.1,935.5h3.7" stroke="#12901e" stroke-width="1.7" fill="none"/><path d="M439,932.6v3.7M437.1,934.5h3.7" stroke="#ff1818" stroke-width="1.7" fill="none"/></g><rect x="270" y="920" width="1" height="19" fill="#a0a0a0"/><rect x="322" y="920" width="1" height="19" fill="#a0a0a0"/><rect x="375" y="920" width="1" height="19" fill="#a0a0a0"/><rect x="419" y="920" width="1" height="19" fill="#a0a0a0"/><rect x="555" y="920" width="1" height="19" fill="#a0a0a0"/></svg>
<div class="a" style="left:78px;top:169px;width:379px;height:163px;background:#f0f0f0"></div>
<div class="a" style="left:78px;top:169px;width:379px;height:38px;background:#fff"></div>
<div class="t" style="left:113px;top:179.88px;font-size:15.5px;color:#9a9aa2;letter-spacing:-0.348px;">View Background Colour</div>
<div class="t" style="left:84px;top:215.3px;font-size:15px;color:#1a1a1a;letter-spacing:-0.248px;">View</div>
<div class="t" style="left:84px;top:243.8px;font-size:15px;color:#1a1a1a;letter-spacing:0.162px;">Colour</div>
<div class="sunk" style="left:142px;top:215px;width:276px;height:22px"></div>
<div class="t" style="left:146px;top:219.3px;font-size:15px;color:#1a1a1a;transform:scaleX(0.8433);transform-origin:0 0;">DESIGN</div>
<div class="sunk" style="left:142px;top:245px;width:276px;height:21px"></div>
<div class="t" style="left:146px;top:248.3px;font-size:15px;color:#1a1a1a;letter-spacing:-0.004px;">black</div>
<div class="sunk" style="left:86px;top:272px;width:363px;height:22px;background:#f0f0f0"></div>
<div class="rais" style="left:141px;top:300px;width:46px;height:25px"></div>
<div class="t" style="left:152.7423828125px;top:304.8px;font-size:15px;color:#1a1a1a;">Set</div>
<div class="rais" style="left:246px;top:300px;width:45px;height:25px"></div>
<div class="t" style="left:248.4931640625px;top:304.8px;font-size:15px;color:#1a1a1a;">Finish</div>
<div class="rais" style="left:351px;top:300px;width:45px;height:25px"></div>
<div class="t" style="left:358.074609375px;top:304.8px;font-size:15px;color:#1a1a1a;">Help</div>
<div class="rais" style="left:424px;top:214px;width:28px;height:22px;background:#ece9d8"></div>
<div class="a" style="left:422px;top:239px;width:33px;height:32px;background:#ece9d8;border:3px solid #5058a8"></div>
<div class="a" style="left:428px;top:245px;width:19px;height:19px;background:#000"></div>
<svg width="975" height="1000"><path d="M306,187.5 h12.5" stroke="#8a8a8a" stroke-width="1"/><rect x="364.5" y="182.5" width="11" height="11" fill="none" stroke="#d4d4d4" stroke-width="1"/><path d="M423,182 l12,12 M435,182 l-12,12" stroke="#8a8a8a" stroke-width="1.1"/><polygon points="90,181 99,177.5 106,181 97,185" fill="#6a9a80"/><polygon points="90,181 97,185 97,196 90,191.5" fill="#f4f4f0"/><polygon points="97,185 106,181 106,191.5 97,196" fill="#2f5a44"/><text x="90.5" y="191" font-family="Liberation Sans" font-size="7" fill="#c01020">12</text><text x="99" y="193" font-family="Liberation Sans" font-size="7.5" font-style="italic" fill="#fff">d</text><rect x="430" y="218" width="16" height="13" fill="#58a8e8" stroke="#a0481c" stroke-width="1.6"/><path d="M431,230 l4,-5 l4,2.5 l3,-3 l3,3 v2.5z" fill="#28a040"/><path d="M446,330 l9,-9 M450,330 l5,-5 M453.5,330 l1.5,-1.5" stroke="#b8b8b8" stroke-width="1"/></svg>
<div class="a" style="left:456px;top:101px;width:343px;height:828.5px;background:#f0f0f0;box-shadow:0 2px 14px rgba(0,0,0,.42)"></div>
<div class="a" style="left:456px;top:101px;width:343px;height:39px;background:#7a7574"></div>
<div class="t" style="left:466px;top:113.3px;font-size:15px;color:#fff;letter-spacing:-0.212px;">Select Colour</div>
<div class="a" style="left:773px;top:111px;width:26px;height:25px;background:#c9494f"></div>
<div class="a" style="left:459px;top:151px;width:336px;height:668.5px;border:1px solid #a0a0a0;box-shadow:inset 1px 1px 0 #fff, 1px 1px 0 #fff"></div>
<div class="sunk" style="left:467px;top:166px;width:320px;height:615px"></div>
<div class="a" style="left:469px;top:168px;width:296px;height:611px;overflow:hidden;background:#fff">
<div class="a" style="left:214px;top:1.6px;width:79px;height:19px;background:#fff"></div>
<div class="a" style="left:1px;top:1.6px;width:213px;height:19px;background:#000"></div>
<div class="t" style="left:2px;top:4.2px;font-size:15px;color:#fff;letter-spacing:0.021px;">black</div>
<div class="a" style="left:214px;top:20.35px;width:79px;height:19px;background:#fff"></div>
<div class="t" style="left:2px;top:22.95px;font-size:15px;color:#1a1a1a;letter-spacing:0.496px;">white</div>
<div class="a" style="left:214px;top:39.1px;width:79px;height:19px;background:#ff0000"></div>
<div class="t" style="left:2px;top:41.7px;font-size:15px;color:#1a1a1a;transform:scaleX(0.9409);transform-origin:0 0;">red</div>
<div class="a" style="left:214px;top:57.85px;width:79px;height:19px;background:#00ff00"></div>
<div class="t" style="left:2px;top:60.45px;font-size:15px;color:#1a1a1a;letter-spacing:-0.267px;">green</div>
<div class="a" style="left:214px;top:76.6px;width:79px;height:19px;background:#0000ff"></div>
<div class="t" style="left:2px;top:79.2px;font-size:15px;color:#1a1a1a;letter-spacing:0.18px;">blue</div>
<div class="a" style="left:214px;top:95.35px;width:79px;height:19px;background:#ffff00"></div>
<div class="t" style="left:2px;top:97.95px;font-size:15px;color:#1a1a1a;letter-spacing:0.163px;">yellow</div>
<div class="a" style="left:214px;top:114.1px;width:79px;height:19px;background:#ff00ff"></div>
<div class="t" style="left:2px;top:116.7px;font-size:15px;color:#1a1a1a;letter-spacing:0.004px;">magenta</div>
<div class="a" style="left:214px;top:132.85px;width:79px;height:19px;background:#00ffff"></div>
<div class="t" style="left:2px;top:135.45px;font-size:15px;color:#1a1a1a;letter-spacing:-0.328px;">cyan</div>
<div class="a" style="left:214px;top:151.6px;width:79px;height:19px;background:#e2e2e2"></div>
<div class="t" style="left:2px;top:154.2px;font-size:15px;color:#1a1a1a;letter-spacing:-0.36px;">grey</div>
<div class="a" style="left:214px;top:170.35px;width:79px;height:19px;background:#404040"></div>
<div class="t" style="left:2px;top:172.95px;font-size:15px;color:#1a1a1a;letter-spacing:-0.191px;">dark grey</div>
<div class="a" style="left:214px;top:189.1px;width:79px;height:19px;background:#cc1a00"></div>
<div class="t" style="left:2px;top:191.7px;font-size:15px;color:#1a1a1a;letter-spacing:-0.204px;">dark red</div>
<div class="a" style="left:214px;top:207.85px;width:79px;height:19px;background:#1e8c0f"></div>
<div class="t" style="left:2px;top:210.45px;font-size:15px;color:#1a1a1a;letter-spacing:-0.246px;">dark green</div>
<div class="a" style="left:214px;top:226.6px;width:79px;height:19px;background:#3838c0"></div>
<div class="t" style="left:2px;top:229.2px;font-size:15px;color:#1a1a1a;letter-spacing:-0.089px;">dark blue</div>
<div class="a" style="left:214px;top:245.35px;width:79px;height:19px;background:#aa2cf5"></div>
<div class="t" style="left:2px;top:247.95px;font-size:15px;color:#1a1a1a;letter-spacing:0.16px;">purple</div>
<div class="a" style="left:214px;top:264.1px;width:79px;height:19px;background:#8c5000"></div>
<div class="t" style="left:2px;top:266.7px;font-size:15px;color:#1a1a1a;letter-spacing:0.036px;">brown</div>
<div class="a" style="left:214px;top:282.85px;width:79px;height:19px;background:#ffa000"></div>
<div class="t" style="left:2px;top:285.45px;font-size:15px;color:#1a1a1a;letter-spacing:-0.142px;">orange</div>
<div class="a" style="left:214px;top:301.6px;width:79px;height:19px;background:#f0f0b0"></div>
<div class="t" style="left:2px;top:304.2px;font-size:15px;color:#1a1a1a;letter-spacing:-0.14px;">off yellow</div>
<div class="a" style="left:214px;top:320.35px;width:79px;height:19px;background:#c0c0c0"></div>
<div class="t" style="left:2px;top:322.95px;font-size:15px;color:#1a1a1a;transform:scaleX(0.9406);transform-origin:0 0;">pen 013</div>
<div class="a" style="left:214px;top:339.1px;width:79px;height:19px;background:#808080"></div>
<div class="t" style="left:2px;top:341.7px;font-size:15px;color:#1a1a1a;transform:scaleX(0.9406);transform-origin:0 0;">pen 018</div>
<div class="a" style="left:214px;top:357.85px;width:79px;height:19px;background:#fff"></div>
<div class="t" style="left:2px;top:360.45px;font-size:15px;color:#1a1a1a;transform:scaleX(0.9406);transform-origin:0 0;">pen 025</div>
<div class="a" style="left:214px;top:376.6px;width:79px;height:19px;background:#00ffff"></div>
<div class="t" style="left:2px;top:379.2px;font-size:15px;color:#1a1a1a;transform:scaleX(0.9334);transform-origin:0 0;">pen 025a</div>
<div class="a" style="left:214px;top:395.35px;width:79px;height:19px;background:#ffff00"></div>
<div class="t" style="left:2px;top:397.95px;font-size:15px;color:#1a1a1a;transform:scaleX(0.9406);transform-origin:0 0;">pen 035</div>
<div class="a" style="left:214px;top:414.1px;width:79px;height:19px;background:#ff00ff"></div>
<div class="t" style="left:2px;top:416.7px;font-size:15px;color:#1a1a1a;transform:scaleX(0.9334);transform-origin:0 0;">pen 035a</div>
<div class="a" style="left:214px;top:432.85px;width:79px;height:19px;background:#ff0000"></div>
<div class="t" style="left:2px;top:435.45px;font-size:15px;color:#1a1a1a;transform:scaleX(0.9406);transform-origin:0 0;">pen 050</div>
<div class="a" style="left:214px;top:451.6px;width:79px;height:19px;background:#00ff00"></div>
<div class="t" style="left:2px;top:454.2px;font-size:15px;color:#1a1a1a;transform:scaleX(0.9334);transform-origin:0 0;">pen 050a</div>
<div class="a" style="left:214px;top:470.35px;width:79px;height:19px;background:#0000ff"></div>
<div class="t" style="left:2px;top:472.95px;font-size:15px;color:#1a1a1a;transform:scaleX(0.9406);transform-origin:0 0;">pen 070</div>
<div class="a" style="left:214px;top:489.1px;width:79px;height:19px;background:#ff8000"></div>
<div class="t" style="left:2px;top:491.7px;font-size:15px;color:#1a1a1a;transform:scaleX(0.9406);transform-origin:0 0;">pen 100</div>
<div class="a" style="left:214px;top:507.85px;width:79px;height:19px;background:#fff"></div>
<div class="t" style="left:2px;top:510.45px;font-size:15px;color:#1a1a1a;transform:scaleX(0.9423);transform-origin:0 0;">shade 0</div>
<div class="a" style="left:214px;top:526.6px;width:79px;height:19px;background:#d8d8d8"></div>
<div class="t" style="left:2px;top:529.2px;font-size:15px;color:#1a1a1a;transform:scaleX(0.9348);transform-origin:0 0;">shade 16</div>
<div class="a" style="left:214px;top:545.35px;width:79px;height:19px;background:#a8a8a8"></div>
<div class="t" style="left:2px;top:547.95px;font-size:15px;color:#1a1a1a;transform:scaleX(0.9348);transform-origin:0 0;">shade 32</div>
<div class="a" style="left:214px;top:564.1px;width:79px;height:19px;background:#808080"></div>
<div class="t" style="left:2px;top:566.7px;font-size:15px;color:#1a1a1a;transform:scaleX(0.9348);transform-origin:0 0;">shade 48</div>
<div class="a" style="left:214px;top:582.85px;width:79px;height:19px;background:#585858"></div>
<div class="t" style="left:2px;top:585.45px;font-size:15px;color:#1a1a1a;transform:scaleX(0.9348);transform-origin:0 0;">shade 64</div>
<div class="a" style="left:214px;top:601.6px;width:79px;height:19px;background:#304010"></div>
<div class="t" style="left:2px;top:604.2px;font-size:15px;color:#1a1a1a;transform:scaleX(0.9348);transform-origin:0 0;">shade 80</div>
</div>
<div class="a" style="left:765px;top:168px;width:20px;height:611px;background:#f0f0f0"></div>
<div class="a" style="left:768px;top:192px;width:14px;height:157px;background:#cdcdcd"></div>
<div class="a" style="left:464.5px;top:163px;width:300.5px;height:617px;border:4px solid #5058a8;box-shadow:inset 2px 2px 0 #828282"></div>
<div class="rais" style="left:468px;top:786.5px;width:319.5px;height:25.5px"></div>
<div class="t" style="left:606.6546875px;top:790.8px;font-size:15px;color:#1a1a1a;">Select</div>
<div class="t" style="left:459px;top:824.6px;font-size:15px;color:#1a1a1a;letter-spacing:0.117px;">[View colour]</div>
<div class="t" style="left:459px;top:845.8px;font-size:15px;color:#1a1a1a;letter-spacing:0.347px;">[No colour]</div>
<div class="t" style="left:459px;top:867px;font-size:15px;color:#1a1a1a;letter-spacing:-0.036px;">[Edit]</div>
<div class="t" style="left:459px;top:888.2px;font-size:15px;color:#1a1a1a;transform:scaleX(0.939);transform-origin:0 0;">[Sameas]</div>
<div class="t" style="left:459px;top:909.4px;font-size:15px;color:#1a1a1a;letter-spacing:-0.193px;">[Browse]</div>
<div class="a" style="left:454.5px;top:904px;width:345px;height:24px;border:4px solid #5058a8"></div>
<svg width="975" height="1000"><path d="M782.3,120 l6.4,6.4 M788.7,120 l-6.4,6.4" stroke="#fff" stroke-width="1.5"/><path d="M770.5,183.5 l4.5,-4.5 l4.5,4.5" fill="none" stroke="#505050" stroke-width="1.8"/><path d="M770.5,767 l4.5,4.5 l4.5,-4.5" fill="none" stroke="#505050" stroke-width="1.8"/></svg>
<svg width="975" height="1000"><g fill="#fff" stroke="#4f57a0" stroke-width="2.2" stroke-linejoin="miter"><path d="M265,350 H365 L437.5,271 L429.5,350 H459.5 V398 H265 Z"/><path d="M62,598 H392 V608.5 L458.5,613 L392,631 V663 H62 Z"/><path d="M157.5,855.5 H412 V877 L455,906.5 L412,894 V901 H157.5 Z"/><rect x="489.5" y="440.5" width="249.5" height="84.5" stroke-width="1.8"/></g></svg>
<div class="co" style="left:112.30000000000001px;width:500px;top:353.7px;font-size:16.3px;line-height:18.7px;border:0;background:none">Hit the <b>&lt;Colour&gt;</b> button</div>
<div class="co" style="left:112.30000000000001px;width:500px;top:372.4px;font-size:16.3px;line-height:18.7px;border:0;background:none">to open the colour panel</div>
<div class="co" style="left:-24px;width:500px;top:601.18px;font-size:16.5px;line-height:19px;border:0;background:none">A Colour can be selected from the colours</div>
<div class="co" style="left:-24px;width:500px;top:620.18px;font-size:16.5px;line-height:19px;border:0;background:none">choice box, or select the <b>&lt;Browse&gt;</b> option</div>
<div class="co" style="left:-24px;width:500px;top:639.18px;font-size:16.5px;line-height:19px;border:0;background:none">below to open the colour picker.</div>
<div class="co" style="left:35px;width:500px;top:859.28px;font-size:16.5px;line-height:19.2px;border:0;background:none">Click on the <b>&lt;Browse&gt;</b> option at</div>
<div class="co" style="left:35px;width:500px;top:878.48px;font-size:16.5px;line-height:19.2px;border:0;background:none">the bottom of the colour panel</div>
<div class="co" style="left:364px;width:500px;top:445.28px;font-size:16.5px;line-height:19px;border:0;background:none">Here will be the list of "Select</div>
<div class="co" style="left:364px;width:500px;top:464.28px;font-size:16.5px;line-height:19px;border:0;background:none">Colours" in the choice box, the</div>
<div class="co" style="left:364px;width:500px;top:483.28px;font-size:16.5px;line-height:19px;border:0;background:none">colours are defined in the</div>
<div class="co" style="left:364px;width:500px;top:502.28px;font-size:16.5px;line-height:19px;border:0;background:none">colours.4d file.</div>
<svg width="975" height="1000"><path d="M596.5,912.5 v17.5 l4,-3.8 l3.2,7.6 l2.8,-1.2 l-3.2,-7.4 h5.4z" fill="#fff" stroke="#000" stroke-width="1"/></svg>
</body></html>
